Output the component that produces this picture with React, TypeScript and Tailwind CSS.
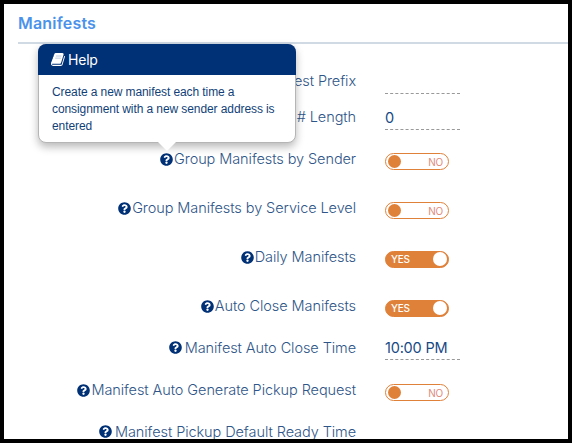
import { useState } from 'react';
import { FaQuestionCircle } from 'react-icons/fa';

interface LabelProps {
    text: string;
    help?: boolean;
    spaced?: boolean;
}

interface SettingRowProps extends LabelProps {
    height: string;
    children?: React.ReactNode;
}

function BookIcon() {
    return (
        <svg viewBox="0 0 1792 1792" fill="currentColor" className="w-[15px] h-[15px]">
            <path d="M1639 478q40 57 18 129l-275 906q-19 64-76.5 107.5t-122.5 43.5h-923q-77 0-148.5-53.5t-99.5-131.5q-24-67-2-127 0-4 3-27t4-37q1-8-3-21.5t-3-19.5q2-11 8-21t16.5-23.5 16.5-23.5q23-38 45-91.5t30-91.5q3-10 .5-30t-.5-28q3-11 17-28t17-23q21-36 42-92t25-90q1-9-2.5-32t.5-28q4-13 22-30.5t22-22.5q19-26 42.5-84.5t27.5-96.5q1-8-3-25.5t-2-26.5q2-8 9-18t18-23 17-21q8-12 16.5-30.5t15-35 16-36 19.5-32 26.5-23.5 36-11.5 47.5 5.5l-1 3q38-9 51-9h761q74 0 114 56t18 130l-274 906q-36 119-71.5 153.5t-128.5 34.5h-869q-27 0-38 15-11 16-1 43 24 70 144 70h923q29 0 56-15.5t35-41.5l300-987q7-22 5-57 38 15 59 43z" />
            <path d="M575 480h680M500 736h680" stroke="#8fa6c6" strokeWidth="70" />
        </svg>
    );
}

function SettingRow({ text, help, spaced, height, children }: SettingRowProps) {
    return (
        <div className={`flex items-center shrink-0 ${height}`}>
            <div className="w-[352px] flex items-center justify-end whitespace-nowrap text-[14.5px] leading-5 font-light tracking-[-0.08px] text-[#2f5688]">
                {help && <FaQuestionCircle className={`w-[13px] h-[13px] text-[#003075] ${spaced ? 'mr-[3px]' : 'mr-px'}`} />}
                {text}
            </div>
            <div className="ml-[29px]">{children}</div>
        </div>
    );
}

function Toggle({ initial = false }: { initial?: boolean }) {
    const [on, setOn] = useState(initial);

    return (
        <button
            onClick={() => setOn(!on)}
            className={`flex items-center justify-between w-16 h-[17px] mt-[4px] rounded-full border border-[#e0813a] text-[10px] leading-none ${on ? 'bg-[#e0813a] text-white pl-[5px] pr-px' : 'bg-white text-[#e08a7c] pl-[2px] pr-[5px]'}`}
        >
            {on ? (
                <>
                    <span className="font-medium tracking-[-0.2px]">YES</span>
                    <span className="w-3.5 h-3.5 rounded-full bg-white" />
                </>
            ) : (
                <>
                    <span className="w-[13px] h-[13px] rounded-full bg-[#e0813a]" />
                    <span className="mt-0.5 tracking-[-0.2px]">NO</span>
                </>
            )}
        </button>
    );
}

function Field({ value }: { value: string }) {
    return (
        <div className="w-[75px] h-[23px] mt-[2px] border-b border-dashed border-[#999999] text-[14.5px] leading-[21px] tracking-[-0.2px] text-[#174a85] whitespace-nowrap">
            {value}
        </div>
    );
}

function HelpPopover() {
    return (
        <div className="absolute left-[34px] top-[40px] w-[258px] h-[99px] rounded-lg border border-[#b5b5b5] bg-white shadow-[0_4px_9px_rgba(0,0,0,0.28)]">
            <div className="flex items-center gap-[2px] h-[31px] pl-[13px] -mx-px -mt-px rounded-t-lg bg-[#003075] text-white text-[14px] tracking-[-0.2px]">
                <BookIcon />
                <span>Help</span>
            </div>
            <p className="pl-[13px] pt-[9px] font-['Liberation_Sans',sans-serif] text-[12px] leading-[17px] tracking-[-0.09px] text-[#123f78] whitespace-nowrap">
                Create a new manifest each time a<br />
                consignment with a new sender address is<br />
                entered
            </p>
            <div className="absolute left-[119px] top-[97px] w-[18px] h-[9px] bg-white [clip-path:polygon(0_0,100%_0,50%_100%)]" />
        </div>
    );
}

export default function App() {
    return (
        <div className="relative w-[572px] h-[443px] overflow-hidden border-4 border-black bg-white font-['Inter',sans-serif]">
            <div className="flex flex-col h-full overflow-hidden">
                <h1 className="shrink-0 h-[40px] ml-[14px] pt-[9px] border-b-2 border-[#d0dae5] text-[16px] leading-5 font-semibold tracking-[0.2px] text-[#4b92eb]">
                    Manifests
                </h1>
                <div className="flex flex-col pt-[18px]">
                    <SettingRow text="Manifest Prefix" height="h-[38px]"><Field value="" /></SettingRow>
                    <SettingRow text="Manifest # Length" height="h-[34px]"><Field value="0" /></SettingRow>
                    <SettingRow text="Group Manifests by Sender" help height="h-[50px]"><Toggle /></SettingRow>
                    <SettingRow text="Group Manifests by Service Level" help height="h-[48px]"><Toggle /></SettingRow>
                    <SettingRow text="Daily Manifests" help height="h-[50px]"><Toggle initial /></SettingRow>
                    <SettingRow text="Auto Close Manifests" help height="h-[48px]"><Toggle initial /></SettingRow>
                    <SettingRow text="Manifest Auto Close Time" help spaced height="h-[35px]"><Field value="10:00 PM" /></SettingRow>
                    <SettingRow text="Manifest Auto Generate Pickup Request" help height="h-[50px]"><Toggle /></SettingRow>
                    <SettingRow text="Manifest Pickup Default Ready Time" help spaced height="h-[33px]" />
                </div>
            </div>
            <HelpPopover />
        </div>
    );
}
